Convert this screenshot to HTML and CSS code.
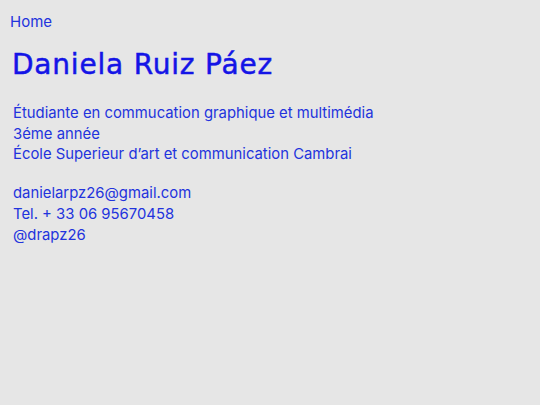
FILE: index.html
```html
<!DOCTYPE html>
<html lang="fr">
<head>
<meta charset="utf-8">
<link rel="stylesheet" href="styles.css">
</head>
<body>
<nav class="nav"><a class="home" href="#">Home</a></nav>
<main class="content">
<h1 class="name">Daniela Ruiz Páez</h1>
<p class="block">Étudiante en commucation graphique et multimédia<br>3éme année<br>École Superieur d’art et communication Cambrai</p>
<p class="block">danielarpz26@gmail.com<br>Tel. + 33 06 95670458<br>@drapz26</p>
</main>
</body>
</html>
```
FILE: styles.css
```css
html, body { margin: 0; padding: 0; }
body {
  background: #e6e6e6;
  color: #2233dd;
  font-family: Inter, "Noto Sans", sans-serif;
  width: 540px;
  height: 405px;
}
.nav { padding: 11px 0 0 10px; }
.home { color: inherit; text-decoration: none; font-size: 15px; line-height: 20px; }
.content { padding: 0 0 0 13px; }
.name {
  margin: 16px 0 0 -1px;
  color: #1414e6;
  font-family: "DejaVu Sans", sans-serif;
  font-weight: normal;
  font-size: 28px;
  line-height: 34px;
  letter-spacing: 0.8px;
  -webkit-text-stroke: 0.5px #1414e6;
}
.block { margin: 21px 0 0 0; font-size: 14.85px; line-height: 20.7px; }
.block + .block { margin-top: 18px; }
```
